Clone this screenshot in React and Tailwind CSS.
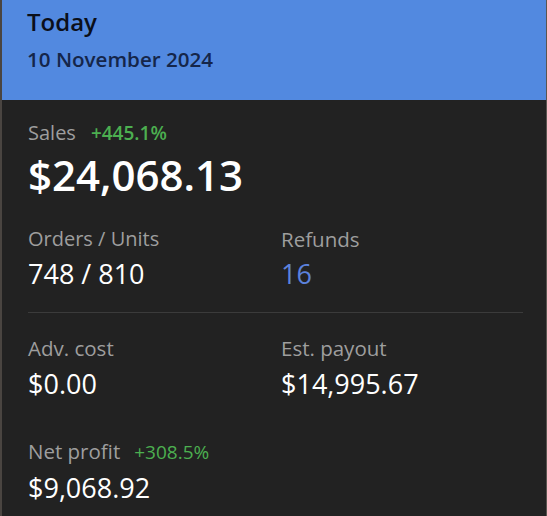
export default function App() {
  return (
    <div
      className="w-[547px] h-[516px] overflow-hidden bg-[#222222] border-l-2 border-l-[#4a4541] border-r border-r-[#5a5550]"
      style={{ fontFamily: '"Open Sans", "Noto Sans", sans-serif' }}
    >
      <div className="h-[100px] bg-[#5289e0] pl-[25px] pt-[6px]">
        <div className="text-[24px] font-semibold text-[#0b0f1a] leading-[32px]">Today</div>
        <div className="mt-[7px] text-[20.6px] font-semibold text-[#15264a] leading-[28px]">
          10 November 2024
        </div>
      </div>

      <div className="px-[26px] pt-[19px]">
        <div className="flex items-baseline gap-[15px]">
          <span className="text-[20px] text-[#9e9e9e] leading-[28px]">Sales</span>
          <span className="text-[19px] font-semibold text-[#4caf50] leading-[28px]">+445.1%</span>
        </div>
        <div className="text-[42px] font-semibold text-white leading-[50px] mt-[3px]">$24,068.13</div>

        <div className="grid grid-cols-[253px_1fr] mt-[25px]">
          <div>
            <div className="text-[20px] text-[#9e9e9e] leading-[28px]">Orders / Units</div>
            <div className="text-[27px] text-white leading-[36px] mt-[3px]">748 / 810</div>
          </div>
          <div>
            <div className="text-[20.5px] text-[#9e9e9e] leading-[28px]">Refunds</div>
            <div className="text-[27px] text-[#5c82dc] leading-[36px] mt-[3px]">16</div>
          </div>
        </div>

        <div className="h-px bg-[#3b3b3b] mt-[20px] mr-[-3px]" />

        <div className="grid grid-cols-[253px_1fr] mt-[21px]">
          <div>
            <div className="text-[20.5px] text-[#9e9e9e] leading-[28px]">Adv. cost</div>
            <div className="text-[27px] text-white leading-[36px] mt-[4px]">$0.00</div>
          </div>
          <div>
            <div className="text-[20.5px] text-[#9e9e9e] leading-[28px]">Est. payout</div>
            <div className="text-[27px] text-white leading-[36px] mt-[4px]">$14,995.67</div>
          </div>
        </div>

        <div className="mt-[35px] flex items-baseline gap-[14px]">
          <span className="text-[20.5px] text-[#9e9e9e] leading-[28px]">Net profit</span>
          <span className="text-[19px] text-[#4caf50] leading-[28px]">+308.5%</span>
        </div>
        <div className="text-[27px] text-white leading-[36px] mt-[4px]">$9,068.92</div>
      </div>
    </div>
  );
}
